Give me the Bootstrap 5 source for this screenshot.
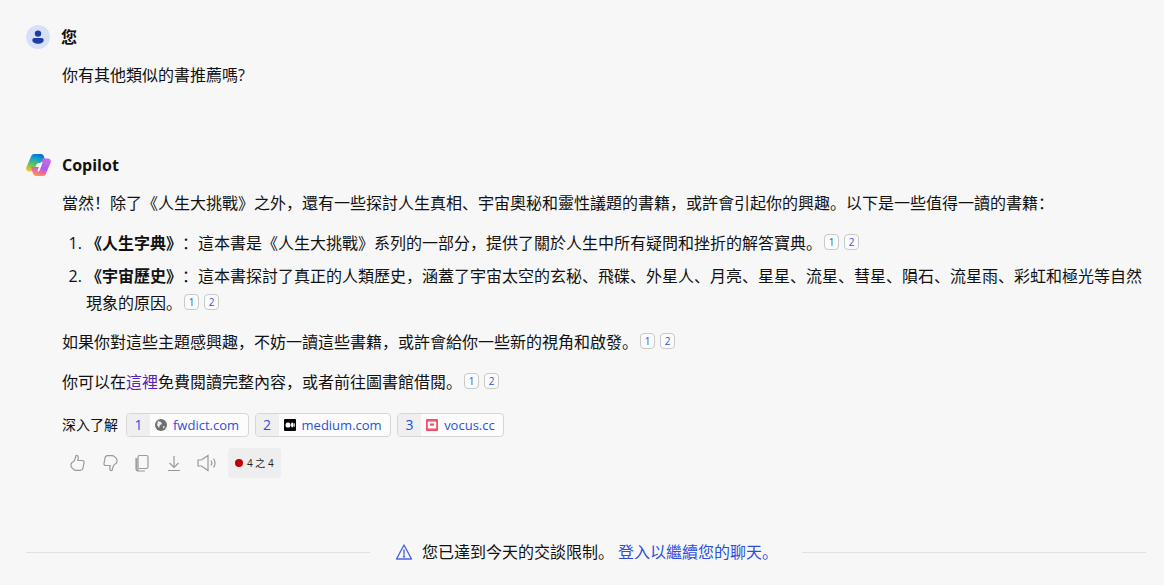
<!DOCTYPE html>
<html lang="zh-Hans">
<head>
  <meta charset="UTF-8">
  <title>Copilot</title>
  <link href="https://cdn.jsdelivr.net/npm/bootstrap@5.3.0/dist/css/bootstrap.min.css" rel="stylesheet">
  <style>
    html, body { height: 585px; overflow: hidden; }
    body { background: #f7f7f7; color: #111; font-family: "Open Sans", "Noto Sans CJK SC", sans-serif; font-size: 16px; line-height: 24px; text-spacing-trim: space-all; }
    .turn-head { height: 24px; margin-left: 26px; gap: 11px; font-weight: 700; }
    .turn-body { margin-left: 62px; width: 1084px; }
    .turn-body p { margin: 0; }
    .user-avatar { width: 24px; height: 24px; background: #d8e0f8; }
    .ref-num { display: inline-block; width: 15px; height: 16px; border: 1px solid #c9c9c9; border-radius: 4px; background: #fbfbfb; color: #3b50d8; font-size: 10px; line-height: 14px; text-align: center; margin-left: 5px; vertical-align: 3px; font-weight: 400; }
    .ref-first { margin-left: 2px; }
    .answer-list { padding-left: 24px; margin: 0; }
    .answer-list li { line-height: 27px; }
    .src-link { height: 24px; border: 1px solid #d6d6d6; border-radius: 4px; background: #fcfcfc; color: #2a4fe0; font-size: 13px; overflow: hidden; text-decoration: none; }
    .src-num { width: 23px; height: 100%; background: #efefef; font-size: 14px; }
    .src-name { padding: 0 8.5px 0 6px; }
    .src-icon { width: 12px; height: 12px; margin-left: 5px; }
    .deep-label { font-size: 14px; }
    .act-icon { color: #9a9a9a; }
    .limit-rule { height: 1px; background: #e2e2e2; }
    .count-chip { height: 30px; padding: 0 7px; background: #eeeeee; border-radius: 4px; font-size: 10px; color: #222; gap: 3px; }
    .count-dot { width: 8px; height: 8px; background: #c00000; }
    .blue-link { color: #2a4fe0; text-decoration: none; }
  </style>
</head>
<body>
  <div class="d-flex align-items-center turn-head" style="margin-top:25px">
    <span class="rounded-circle d-flex align-items-center justify-content-center user-avatar">
      <svg width="14" height="14" viewBox="0 0 14 14"><circle cx="7" cy="3.6" r="3.200" fill="#1c3fa6"/><path d="M1.300 10c0-1.300 1-2 2.200-2h7c1.200 0 2.200.7 2.200 2 0 2.500-2.800 3.700-5.700 3.700S1.300 12.500 1.300 10z" fill="#1c3fa6"/></svg>
    </span>
    <span>您</span>
  </div>
  <div class="turn-body" style="margin-top:14px"><p>你有其他類似的書推薦嗎?</p></div>

  <div class="d-flex align-items-center turn-head" style="margin-top:66px">
    <svg width="25" height="24" viewBox="0 0 25 24">
      <defs>
        <linearGradient id="cpA" x1="0.6" y1="0" x2="0.3" y2="1"><stop offset="0" stop-color="#0b6fd6"/><stop offset="0.3" stop-color="#14a5c8"/><stop offset="0.6" stop-color="#5cc060"/><stop offset="1" stop-color="#f5c62c"/></linearGradient>
        <linearGradient id="cpB" x1="0.7" y1="0" x2="0.3" y2="1"><stop offset="0" stop-color="#c96be6"/><stop offset="0.5" stop-color="#a85ff0"/><stop offset="0.75" stop-color="#f0689a"/><stop offset="1" stop-color="#ff9a50"/></linearGradient>
      </defs>
      <path d="M8 1h7c1.500 0 2.500 1 3 2.500L20 10H13c-1.500 0-2.500 1-3 2.500L8.500 18.500H3c-2 0-3.500-2-2.700-4L5 3.500C5.500 2 6.500 1 8 1z" fill="url(#cpA)"/>
      <path d="M17 23h-7c-1.500 0-2.500-1-3-2.500L5 14h7c1.500 0 2.500-1 3-2.500L16.500 5.500H22c2 0 3.500 2 2.700 4L20 20.500C19.500 22 18.500 23 17 23z" fill="url(#cpB)"/>
      <path d="M15.500 10 12.500 17.500" fill="none" stroke="#fff" stroke-width="2" stroke-linecap="round"/>
    </svg>
    <span>Copilot</span>
  </div>
  <div class="turn-body" style="margin-top:14px">
    <p>當然&#xFF01;除了《人生大挑戰》之外&#xFF0C;還有一些探討人生真相、宇宙奧秘和靈性議題的書籍&#xFF0C;或許會引起你的興趣。以下是一些值得一讀的書籍&#xFF1A;</p>
    <ol class="answer-list" style="margin-top:15px">
      <li><b>《人生字典》</b>&#xFF1A;這本書是《人生大挑戰》系列的一部分&#xFF0C;提供了關於人生中所有疑問和挫折的解答寶典。<span class="ref-num ref-first">1</span><span class="ref-num">2</span></li>
      <li style="margin-top:6px"><b>《宇宙歷史》</b>&#xFF1A;這本書探討了真正的人類歷史&#xFF0C;涵蓋了宇宙太空的玄秘、飛碟、外星人、月亮、星星、流星、彗星、隕石、流星雨、彩虹和極光等自然現象的原因。<span class="ref-num ref-first">1</span><span class="ref-num">2</span></li>
    </ol>
    <p style="margin-top:13px">如果你對這些主題感興趣&#xFF0C;不妨一讀這些書籍&#xFF0C;或許會給你一些新的視角和啟發。<span class="ref-num ref-first">1</span><span class="ref-num">2</span></p>
    <p style="margin-top:16px">你可以在<a class="blue-link" href="#" style="color:#5b1fb5">這裡</a>免費閱讀完整內容&#xFF0C;或者前往圖書館借閱。<span class="ref-num ref-first">1</span><span class="ref-num">2</span></p>

    <div class="d-flex align-items-center" style="margin-top:19px;gap:6px">
      <span class="deep-label" style="margin-right:2px">深入了解</span>
      <a class="d-flex align-items-center src-link" href="#">
        <span class="d-flex align-items-center justify-content-center src-num">1</span>
        <svg class="src-icon" viewBox="0 0 12 12"><circle cx="6" cy="6" r="6" fill="#6f6f6f"/><path d="M3 2l3 1 1 2-2 1-1 3-2-3zM8 7l2 .5-1.500 2.500z" fill="#efefef"/></svg>
        <span class="src-name">fwdict.com</span>
      </a>
      <a class="d-flex align-items-center src-link" href="#">
        <span class="d-flex align-items-center justify-content-center src-num">2</span>
        <svg class="src-icon" viewBox="0 0 12 12"><rect width="12" height="12" rx="1" fill="#050505"/><ellipse cx="4" cy="6" rx="2.500" ry="2.600" fill="#fff"/><ellipse cx="8.300" cy="6" rx="1.300" ry="2.400" fill="#fff"/><ellipse cx="10.300" cy="6" rx=".5" ry="2" fill="#fff"/></svg>
        <span class="src-name">medium.com</span>
      </a>
      <a class="d-flex align-items-center src-link" href="#">
        <span class="d-flex align-items-center justify-content-center src-num">3</span>
        <svg class="src-icon" viewBox="0 0 12 12"><rect width="12" height="12" rx="1" fill="#f2506a"/><rect x="1.800" y="2.500" width="8.400" height="7" rx="1" fill="#fff"/><rect x="4" y="4.500" width="4" height="2.200" fill="#f2506a"/></svg>
        <span class="src-name">vocus.cc</span>
      </a>
    </div>

    <div class="d-flex align-items-center act-icon" style="margin-top:11px;margin-left:6px;gap:12px">
      <svg width="20" height="20" viewBox="0 0 20 20" fill="none" stroke="currentColor" stroke-width="1.200"><path d="M4 9.500c1.500-.5 2.500-2 3-3.500l1-3.500c1.500-.5 2.500.8 2.200 2.500L9.800 7.500h4.500c1.200 0 2 1 1.700 2.200l-1 5.300c-.3 1.500-1.300 2.300-2.700 2.300H8c-1 0-1.800-.3-2.500-1l-2-2c-1-1.500-.5-3.800.5-4.800z"/></svg>
      <svg width="20" height="20" viewBox="0 0 20 20" fill="none" stroke="currentColor" stroke-width="1.200"><path d="M16 10.500c-1.500.5-2.500 2-3 3.500l-1 3.500c-1.500.5-2.500-.8-2.200-2.500l.4-2.500H5.700c-1.200 0-2-1-1.700-2.200L5 5c.3-1.500 1.300-2.300 2.700-2.300H12c1 0 1.800.3 2.500 1l2 2c1 1.500.5 3.800-.5 4.800z"/></svg>
      <svg width="20" height="20" viewBox="0 0 20 20" fill="none" stroke="currentColor" stroke-width="1.200"><rect x="6" y="2.500" width="10" height="13" rx="1.500"/><path d="M4 5v10.500c0 1.500 1 2.500 2.500 2.500H13"/><path d="M4.800 5.200v9.800c0 1.200.8 2.200 2 2.200"/></svg>
      <svg width="20" height="20" viewBox="0 0 20 20" fill="none" stroke="currentColor" stroke-width="1.200"><path d="M10 3v11M5.500 10l4.500 4.500 4.500-4.500M4 17.500h12"/></svg>
      <svg width="22" height="20" viewBox="0 0 22 20" fill="none" stroke="currentColor" stroke-width="1.200"><path d="M2 7v6h3.500l6.500 4.500v-15L5.500 7z"/><path d="M15 7.500c1 1.500 1 3.500 0 5M17.500 5.500c1.800 2.700 1.800 6.300 0 9"/></svg>
      <span class="d-flex align-items-center count-chip" style="margin-left:-2px"><span class="rounded-circle count-dot"></span><span style="margin-left:1px">4 之 4</span></span>
    </div>
  </div>

  <div class="d-flex align-items-center" style="margin:62px 18px 0 26px;height:24px">
    <span class="flex-grow-1 limit-rule"></span>
    <span class="d-flex align-items-center" style="margin:0 24px 0 25px;gap:9px">
      <svg width="18" height="18" viewBox="0 0 18 18" fill="none" stroke="#4a68e0" stroke-width="1.400" stroke-linejoin="round"><path d="M9 2 1.500 16h15z"/><path d="M9 7v4.500" stroke-linecap="round"/><circle cx="9" cy="13.500" r=".5"/></svg>
      <span>您已達到今天的交談限制。 <a class="blue-link" href="#">登入以繼續您的聊天。</a></span>
    </span>
    <span class="flex-grow-1 limit-rule"></span>
  </div>
</body>
</html>
